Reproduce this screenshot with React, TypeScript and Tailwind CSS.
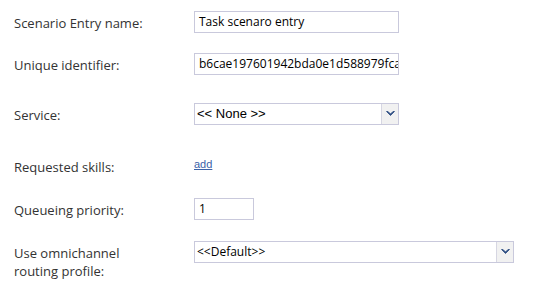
import React from "react";

function Chevron() {
  return (
    <svg width="9" height="6" viewBox="0 0 9 6">
      <path d="M0.5 0.5 L4.5 4.5 L8.5 0.5 L7 0.5 L4.5 3 L2 0.5 Z" fill="#2b4b82" stroke="#2b4b82" strokeWidth="0.8" strokeLinejoin="round" />
    </svg>
  );
}

function Select({ value, width, font }: { value: string; width: string; font: string }) {
  return (
    <div className={`flex h-[22px] ${width} items-stretch border border-[#c9c9dc] bg-white`}>
      <div className={`flex flex-1 items-center pl-[2px] text-black ${font}`}>{value}</div>
      <div className="flex w-[17px] items-center justify-center border-l border-[#d6d6e2] bg-[#f1f1f1]">
        <Chevron />
      </div>
    </div>
  );
}

export default function App() {
  const labelCls = "w-[194px] shrink-0 pl-[14px] pt-[3px] text-[13px] text-[#333] leading-[17px]";
  const inputCls =
    "flex h-[22px] items-center border border-[#c9c9dc] bg-white pl-[4px] text-[12px] text-black overflow-hidden whitespace-nowrap";

  return (
    <div className="h-[289px] w-[538px] bg-white pt-[11px] font-['Open_Sans',sans-serif]">
      <div className="flex h-[22px] items-center">
        <div className={labelCls}>Scenario Entry name:</div>
        <div className={`${inputCls} w-[205px]`}>Task scenaro entry</div>
      </div>

      <div className="mt-[20px] flex h-[22px] items-center">
        <div className={labelCls}>Unique identifier:</div>
        <div className={`${inputCls} w-[205px]`}>b6cae197601942bda0e1d588979fca3e</div>
      </div>

      <div className="mt-[28px] flex h-[22px] items-center">
        <div className={labelCls}>Service:</div>
        <Select value="<< None >>" width="w-[205px]" font="font-['Liberation_Sans',sans-serif] text-[13px]" />
      </div>

      <div className="mt-[28px] flex h-[22px] items-center">
        <div className={`${labelCls} pt-[6px]`}>Requested skills:</div>
        <a className="font-['Liberation_Sans',sans-serif] text-[11px] text-[#3b62a8] underline" href="#">
          add
        </a>
      </div>

      <div className="mt-[23px] flex h-[22px] items-center">
        <div className={labelCls}>Queueing priority:</div>
        <div className={`${inputCls} w-[60px]`}>1</div>
      </div>

      <div className="mt-[21px] flex items-start">
        <div className="w-[194px] shrink-0 pl-[14px] pt-[3px] text-[13px] leading-[18px] text-[#333]">
          Use omnichannel
          <br />
          routing profile:
        </div>
        <Select value="<<Default>>" width="w-[320px]" font="text-[12px]" />
      </div>
    </div>
  );
}
